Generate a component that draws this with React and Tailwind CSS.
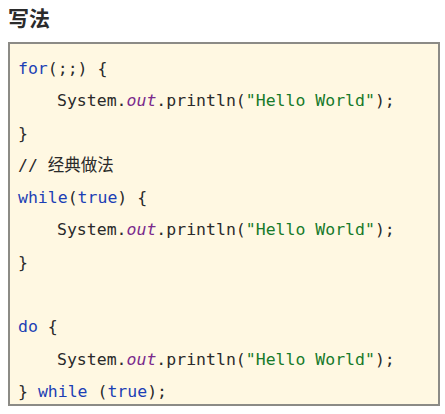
import React from 'react';

const K = ({ children }) => <span className="text-[#1c3fb5]">{children}</span>;
const S = ({ children }) => <span className="text-[#177a2a]">{children}</span>;
const F = () => <span className="italic text-[#7a2a8c]">out</span>;

const Println = () => (
  <div className="pl-[39px]">
    System.<F />.println(<S>"Hello World"</S>);
  </div>
);

const App = () => {
  return (
    <div className="w-[445px] h-[414px] bg-white px-2 pt-[3px]">
      <h2 className="text-[21px] leading-[28px] font-bold text-[#2b2b2b] [font-family:'Noto_Sans_CJK_SC',sans-serif]">
        写法
      </h2>
      <div className="mt-[11px] w-[432px] h-[364px] border-2 border-[#8c8b86] bg-[#fff8e2] pl-2 pt-[9px] text-[16.5px] leading-[32.3px] text-[#2a2a2a] [font-family:'DejaVu_Sans_Mono','Noto_Sans_CJK_SC',monospace]">
        <div><K>for</K>(;;) {'{'}</div>
        <Println />
        <div>{'}'}</div>
        <div>// 经典做法</div>
        <div><K>while</K>(<K>true</K>) {'{'}</div>
        <Println />
        <div>{'}'}</div>
        <div>&nbsp;</div>
        <div><K>do</K> {'{'}</div>
        <Println />
        <div>{'}'} <K>while</K> (<K>true</K>);</div>
      </div>
    </div>
  );
};

export default App;
